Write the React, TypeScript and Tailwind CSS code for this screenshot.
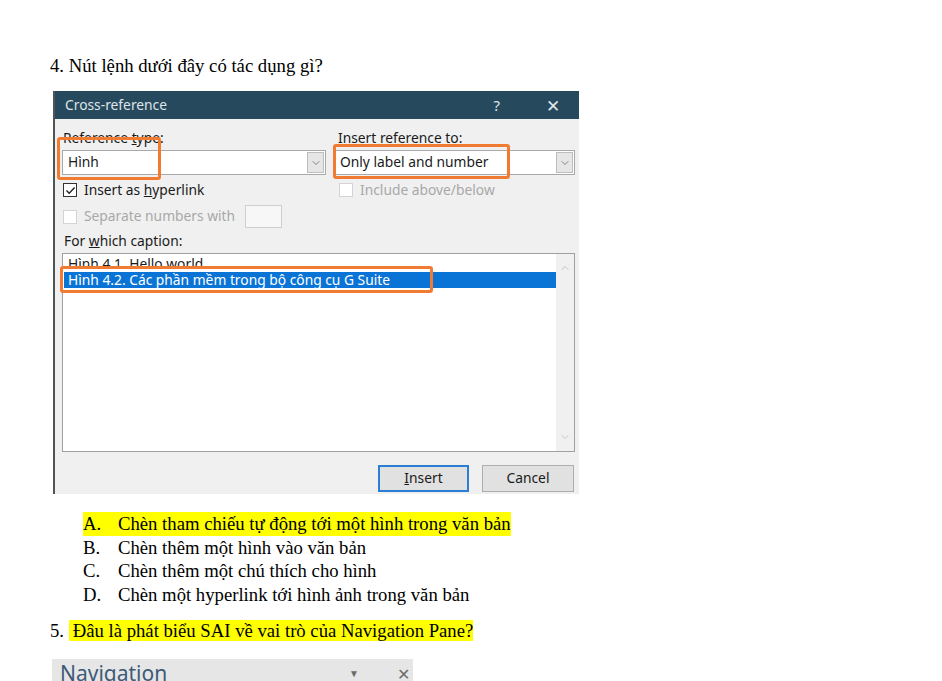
import { ChevronDown, ChevronUp } from "lucide-react";

const serif = "font-['Liberation_Serif','Times_New_Roman',serif]";
const ui = "font-['Noto_Sans','Open_Sans',sans-serif]";

// Ô combo kiểu Windows, nút mũi tên bên phải
function Combo({ value, width }: { value: string; width: string }) {
  return (
    <div className={`flex h-[25px] ${width} items-stretch border border-[#a9a9a9] bg-white`}>
      <div className="flex flex-1 items-center pl-[5px] text-[13.8px] text-[#1a1a1a]">{value}</div>
      <div className="m-[1px] flex w-[17px] items-center justify-center border border-[#bdbdbd] bg-[#e6e6e6]">
        <ChevronDown size={12} strokeWidth={1.5} className="text-[#606060]" />
      </div>
    </div>
  );
}

function Check({ checked, disabled, label }: { checked?: boolean; disabled?: boolean; label: React.ReactNode }) {
  return (
    <div className={`flex items-center gap-[7px] text-[13.8px] ${disabled ? "text-[#a8a8a8]" : "text-[#1a1a1a]"}`}>
      <div
        className={`flex h-[14px] w-[14px] items-center justify-center border bg-white ${
          disabled ? "border-[#d4d4d4]" : "border-[#333]"
        }`}
      >
        {checked && (
          <svg width="11" height="11" viewBox="0 0 11 11">
            <path d="M1.5 5.5 L4.2 8.3 L9.6 2.5" fill="none" stroke="#222" strokeWidth="1.4" />
          </svg>
        )}
      </div>
      <span>{label}</span>
    </div>
  );
}

function CrossReferenceDialog() {
  return (
    <div className={`relative ml-[3px] mt-[13px] flex h-[403px] w-[526px] flex-col border-l-2 border-[#4f5459] bg-[#f0f0f0] ${ui}`}>
      {/* thanh tiêu đề */}
      <div className="flex h-[28px] items-center bg-[#27495d] pl-[10px] pr-[19px] text-[13.8px] text-[#dfe4e8]">
        <span className="flex-1">Cross-reference</span>
        <span className="mr-[46px] text-[15px]">?</span>
        <span className="text-[17px] leading-none">✕</span>
      </div>

      <div className="flex flex-1 flex-col pl-[7px] pr-[5px] pt-[11px]">
        <div className="flex gap-[8px]">
          <div className="flex w-[264px] flex-col">
            <div className="h-[16px] pl-[1px] text-[13.8px] leading-[16px] text-[#1a1a1a]">
              Reference <span className="underline">t</span>ype:
            </div>
            <div className="mt-[4px]">
              <Combo value="Hình" width="w-[264px]" />
            </div>
            <div className="mt-[5px] flex h-[20px] items-center pl-[1px]">
              <Check
                checked
                label={
                  <>
                    Insert as <span className="underline">h</span>yperlink
                  </>
                }
              />
            </div>
            <div className="mt-[5px] flex h-[23px] items-center pl-[1px]">
              <Check disabled label="Separate numbers with" />
              <div className="ml-[10px] h-[23px] w-[37px] border border-[#cfcfcf] bg-[#f7f7f7]" />
            </div>
          </div>
          <div className="flex w-[241px] flex-col">
            <div className="h-[16px] pl-[4px] text-[13.8px] leading-[16px] text-[#1a1a1a]">
              Insert <span className="underline">r</span>eference to:
            </div>
            <div className="mt-[4px]">
              <Combo value="Only label and number" width="w-[241px]" />
            </div>
            <div className="mt-[5px] flex h-[20px] items-center pl-[5px]">
              <Check disabled label="Include above/below" />
            </div>
          </div>
        </div>

        <div className="mt-[5px] h-[16px] pl-[2px] text-[13.8px] leading-[16px] text-[#1a1a1a]">
          For <span className="underline">w</span>hich caption:
        </div>

        {/* danh sách chú thích */}
        <div className="mt-[4px] flex h-[199px] w-[513px] border border-[#a0a0a0] bg-white">
          <div className="flex flex-1 flex-col overflow-hidden pl-[1px] pt-[8px]">
            <div className="-mt-[6px] flex flex-col text-[13.8px]">
              <div className="h-[16px] pl-[4px] leading-[16px] text-[#1a1a1a]">Hình 4.1. Hello world</div>
              <div className="h-[16px] bg-[#0a74d6] pl-[4px] leading-[16px] text-white">
                Hình 4.2. Các phần mềm trong bộ công cụ G Suite
              </div>
            </div>
          </div>
          <div className="flex w-[18px] flex-col items-center justify-between bg-[#f0f0f0] py-[8px]">
            <ChevronUp size={12} strokeWidth={1.5} className="text-[#b5b5b5]" />
            <ChevronDown size={12} strokeWidth={1.5} className="text-[#b5b5b5]" />
          </div>
        </div>

        <div className="mt-[13px] flex justify-end gap-[13px]">
          <div className="flex h-[27px] w-[91px] items-center justify-center border-2 border-[#2a7fd4] bg-[#e1e1e1] text-[13.8px] text-[#1a1a1a]">
            <span>
              <span className="underline">I</span>nsert
            </span>
          </div>
          <div className="flex h-[27px] w-[92px] items-center justify-center border border-[#adadad] bg-[#e1e1e1] text-[13.8px] text-[#1a1a1a]">
            Cancel
          </div>
        </div>
      </div>

      {/* khung cam đánh dấu */}
      <div className="absolute left-[2px] top-[46px] h-[43px] w-[104px] rounded-[3px] border-[3px] border-[#f27b32]" />
      <div className="absolute left-[278px] top-[53px] h-[35px] w-[177px] rounded-[3px] border-[3px] border-[#f27b32]" />
      <div className="absolute left-[5px] top-[175px] h-[27px] w-[373px] rounded-[3px] border-[3px] border-[#f27b32]" />
    </div>
  );
}

const answers = [
  { key: "A.", text: "Chèn tham chiếu tự động tới một hình trong văn bản", mark: true },
  { key: "B.", text: "Chèn thêm một hình vào văn bản" },
  { key: "C.", text: "Chèn thêm một chú thích cho hình" },
  { key: "D.", text: "Chèn một hyperlink tới hình ảnh trong văn bản" },
];

export default function App() {
  return (
    <div className="min-h-screen bg-white pl-[50px] pt-[54px]">
      <p className={`${serif} text-[18.7px] leading-[24px] text-black`}>4. Nút lệnh dưới đây có tác dụng gì?</p>

      <CrossReferenceDialog />

      <div className={`${serif} mt-[18px] flex flex-col pl-[33px] text-[18.7px] leading-[23.5px] text-black`}>
        {answers.map((a) => (
          <div key={a.key} className="flex">
            <span className={a.mark ? "bg-[#ffff00]" : ""}>
              <span className="inline-block w-[35px]">{a.key}</span>
              {a.text}
            </span>
          </div>
        ))}
      </div>

      <p className={`${serif} mt-[13px] text-[18.7px] leading-[24px] text-black`}>
        5. <span className="bg-[#ffff00] pl-[4px]">Đâu là phát biểu SAI về vai trò của Navigation Pane?</span>
      </p>

      <div className={`${ui} ml-[2px] mt-[16px] flex h-[40px] w-[361px] items-start bg-[#e6e6e6] pl-[8px] pr-[3px] pt-[1px]`}>
        <span className="flex-1 text-[21px] leading-[26px] text-[#3d5a78]">Navigation</span>
        <span className="mr-[38px] mt-[6px] text-[10px] text-[#6b6b6b]">▼</span>
        <span className="mt-[2px] text-[16px] text-[#6b6b6b]">✕</span>
      </div>
    </div>
  );
}
